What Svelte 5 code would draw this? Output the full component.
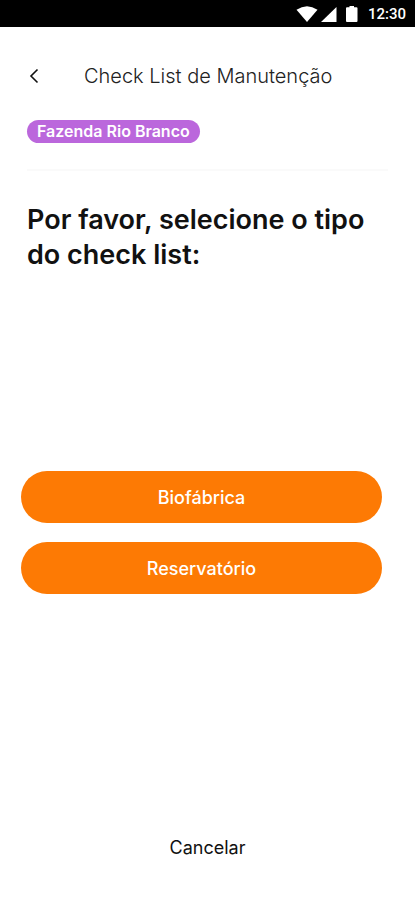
<script lang="ts">
    const farm = 'Fazenda Rio Branco';
    const types = ['Biofábrica', 'Reservatório'];

    let selected = $state<string | null>(null);
</script>

<div class="screen">
    <div class="status">
        <svg class="wifi" viewBox="0 0 22 16" aria-hidden="true">
            <path d="M0.5 3.8Q11 -3.2 21.5 3.8L11 16Z" />
        </svg>
        <svg class="signal" viewBox="0 0 17 16" aria-hidden="true">
            <path d="M16.500 1V16.500H0.500Z" />
        </svg>
        <svg class="battery" viewBox="0 0 12 16" aria-hidden="true">
            <path d="M3.500 0h4.500v1.200H10.500a1 1 0 0 1 1 1V15a1 1 0 0 1-1 1H1a1 1 0 0 1-1-1V2.200a1 1 0 0 1 1-1h2.500z" />
        </svg>
        <time>12:30</time>
    </div>

    <header>
        <button class="back" aria-label="Voltar">
            <svg viewBox="0 0 10 16" aria-hidden="true">
                <path d="M8.500 1.500L2 8l6.500 6.500" />
            </svg>
        </button>
        <h1>Check List de Manutenção</h1>
    </header>

    <div class="farm">
        <span class="badge">{farm}</span>
    </div>

    <main>
        <h2>Por favor, selecione o tipo do check list:</h2>
        <div class="options">
            {#each types as type}
                <button class="option" aria-pressed={selected === type} onclick={() => (selected = type)}>
                    {type}
                </button>
            {/each}
        </div>
    </main>

    <footer>
        <button class="cancel" onclick={() => (selected = null)}>Cancelar</button>
    </footer>
</div>

<style>
    :global(body) {
        margin: 0;
        background: #fff;
    }

    .screen {
        display: flex;
        flex-direction: column;
        min-height: 100vh;
        font-family: Inter, sans-serif;
        color: #111;
    }

    button {
        padding: 0;
        border: none;
        background: none;
        font-family: inherit;
        color: inherit;
        cursor: pointer;
    }

    .status {
        display: flex;
        align-items: center;
        justify-content: flex-end;
        height: 27px;
        padding-right: 9px;
        background: #000;
        color: #fff;
    }

    .status svg {
        height: 16px;
        fill: #fff;
    }

    .wifi {
        width: 22px;
    }

    .signal {
        width: 17px;
        margin-left: 2px;
    }

    .battery {
        width: 12px;
        margin: 0 10px 0 9px;
    }

    time {
        font-family: Roboto, sans-serif;
        font-size: 15px;
        font-weight: 500;
    }

    header {
        display: flex;
        align-items: center;
        gap: 32px;
        padding: 33px 28px 28px;
    }

    .back {
        display: flex;
        width: 24px;
        height: 32px;
        align-items: center;
    }

    .back svg {
        width: 12px;
        height: 16px;
        fill: none;
        stroke: #111;
        stroke-width: 1.6;
    }

    h1 {
        margin: 0;
        font-size: 20px;
        line-height: 32px;
        font-weight: 300;
        color: #222;
    }

    .farm {
        display: flex;
        margin: 0 27px;
        padding-bottom: 26px;
        border-bottom: 2px solid #fafafa;
    }

    .badge {
        padding: 0 10px;
        border-radius: 12px;
        background: #bb67dc;
        color: #fff;
        font-size: 16px;
        line-height: 23px;
        font-weight: 600;
    }

    h2 {
        margin: 31px 27px 0;
        font-size: 27px;
        line-height: 35px;
        font-weight: 600;
    }

    .options {
        display: flex;
        flex-direction: column;
        gap: 19px;
        margin: 199px 33px 48px 21px;
    }

    .option {
        height: 52px;
        border-radius: 26px;
        background: #fd7a04;
        color: #fff;
        font-size: 18px;
        font-weight: 500;
    }

    footer {
        display: flex;
        justify-content: center;
        margin-top: auto;
        padding-bottom: 36px;
    }

    .cancel {
        font-size: 18px;
        line-height: 32px;
    }
</style>
